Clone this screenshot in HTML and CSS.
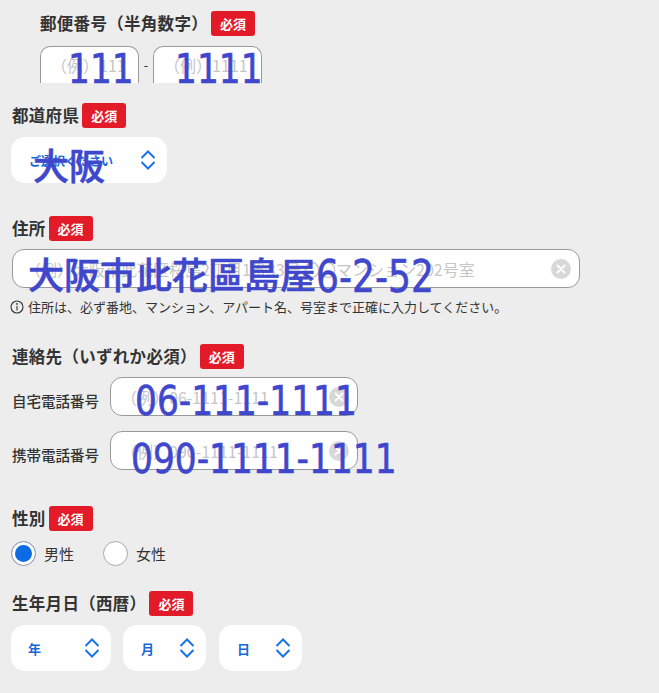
FILE: index.html
```html
<!DOCTYPE html>
<html lang="ja">
<head>
  <meta charset="UTF-8">
  <meta name="viewport" content="width=device-width, initial-scale=1.0">
  <title>お客様情報の入力</title>
  <link rel="stylesheet" href="styles.css">
</head>
<body>
  <main class="form">
    <section class="field field-postal">
      <div class="label-row">
        <span class="label">郵便番号（半角数字）</span>
        <span class="badge">必須</span>
      </div>
      <div class="postal-row">
        <input class="text-input postal-input postal-first" type="text" placeholder="（例）111">
        <span class="dash">-</span>
        <input class="text-input postal-input postal-second" type="text" placeholder="（例）1111">
      </div>
    </section>

    <section class="field field-pref">
      <div class="label-row">
        <span class="label">都道府県</span>
        <span class="badge">必須</span>
      </div>
      <div class="select-box select-pref">
        <span class="select-text">ご選択ください</span>
        <svg class="chevrons" viewBox="0 0 16 20" width="16" height="20"><path d="M1.5 8 L8 1.5 L14.5 8 M1.5 12 L8 18.5 L14.5 12"/></svg>
      </div>
    </section>

    <section class="field field-address">
      <div class="label-row">
        <span class="label">住所</span>
        <span class="badge">必須</span>
      </div>
      <div class="input-wrap address-wrap">
        <input class="text-input address-input" type="text" placeholder="（例）大阪市此花区桜島2丁目1番33号 〇〇マンション202号室">
        <span class="clear-btn"><svg viewBox="0 0 20 20" width="20" height="20"><path d="M6.5 6.5 L13.5 13.5 M13.5 6.5 L6.5 13.5"/></svg></span>
      </div>
      <p class="note">
        <svg class="info-icon" viewBox="0 0 14 14" width="14" height="14"><circle cx="7" cy="7" r="6"/><path d="M7 6 V10.5"/><circle class="dot" cx="7" cy="3.9" r="0.9"/></svg>
        住所は、必ず番地、マンション、アパート名、号室まで正確に入力してください。
      </p>
    </section>

    <section class="field field-contact">
      <div class="label-row">
        <span class="label">連絡先（いずれか必須）</span>
        <span class="badge">必須</span>
      </div>
      <div class="phone-row">
        <span class="phone-label">自宅電話番号</span>
        <div class="input-wrap phone-wrap">
          <input class="text-input phone-input" type="text" placeholder="（例）06-1111-1111">
          <span class="clear-btn"><svg viewBox="0 0 20 20" width="20" height="20"><path d="M6.5 6.5 L13.5 13.5 M13.5 6.5 L6.5 13.5"/></svg></span>
        </div>
      </div>
      <div class="phone-row phone-row-second">
        <span class="phone-label">携帯電話番号</span>
        <div class="input-wrap phone-wrap">
          <input class="text-input phone-input" type="text" placeholder="（例）090-1111-1111">
          <span class="clear-btn"><svg viewBox="0 0 20 20" width="20" height="20"><path d="M6.5 6.5 L13.5 13.5 M13.5 6.5 L6.5 13.5"/></svg></span>
        </div>
      </div>
    </section>

    <section class="field field-gender">
      <div class="label-row">
        <span class="label">性別</span>
        <span class="badge">必須</span>
      </div>
      <div class="radio-row">
        <label class="radio-item"><span class="radio checked"></span>男性</label>
        <label class="radio-item"><span class="radio"></span>女性</label>
      </div>
    </section>

    <section class="field field-birth">
      <div class="label-row">
        <span class="label">生年月日（西暦）</span>
        <span class="badge">必須</span>
      </div>
      <div class="date-row">
        <div class="select-box select-year">
          <span class="select-text">年</span>
          <svg class="chevrons" viewBox="0 0 16 20" width="16" height="20"><path d="M1.5 8 L8 1.5 L14.5 8 M1.5 12 L8 18.5 L14.5 12"/></svg>
        </div>
        <div class="select-box select-month">
          <span class="select-text">月</span>
          <svg class="chevrons" viewBox="0 0 16 20" width="16" height="20"><path d="M1.5 8 L8 1.5 L14.5 8 M1.5 12 L8 18.5 L14.5 12"/></svg>
        </div>
        <div class="select-box select-day">
          <span class="select-text">日</span>
          <svg class="chevrons" viewBox="0 0 16 20" width="16" height="20"><path d="M1.5 8 L8 1.5 L14.5 8 M1.5 12 L8 18.5 L14.5 12"/></svg>
        </div>
      </div>
    </section>
  </main>

  <!-- hand-typed answers laid over the form -->
  <div class="scribbles">
    <span class="scribble narrow s-postal-first">111</span>
    <span class="scribble narrow s-postal-second">1111</span>
    <span class="scribble s-pref">大阪</span>
    <span class="scribble s-address">大阪市此花區島屋<span class="address-num">6-2-52</span></span>
    <span class="scribble narrow s-home">06-111-1111</span>
    <span class="scribble narrow s-mobile">090-1111-1111</span>
  </div>
</body>
</html>
```

FILE: styles.css
```css
* {
  box-sizing: border-box;
}
body {
  margin: 0;
  width: 659px;
  height: 693px;
  overflow: hidden;
  background-color: #ededed;
  color: #333;
  font-family: "Noto Sans CJK JP", "Noto Sans", sans-serif;
  position: relative;
}
.form {
  padding: 11px 0 0 12px;
}
.label-row {
  display: flex;
  align-items: center;
  gap: 3px;
  height: 25px;
}
.label {
  font-size: 16.5px;
  font-weight: 700;
  letter-spacing: 0.3px;
  line-height: 25px;
}
.badge {
  width: 44px;
  height: 25px;
  border-radius: 3px;
  background-color: #e31b28;
  color: white;
  text-align: center;
  font-size: 13px;
  font-weight: 700;
  line-height: 25px;
}

/* text inputs */
.text-input {
  display: block;
  border: 1px solid #9a9a9a;
  background: white;
  font-family: inherit;
  font-size: 16px;
  color: #333;
  padding: 0 12px;
  outline: none;
}
.text-input::placeholder {
  color: #c6c6c6;
}
.input-wrap {
  position: relative;
}
.clear-btn {
  position: absolute;
  right: 9px;
  top: 50%;
  width: 20px;
  height: 20px;
  margin-top: -10px;
  border-radius: 50%;
  background-color: #d8d8d8;
}
.clear-btn svg {
  display: block;
  fill: none;
  stroke: white;
  stroke-width: 2;
  stroke-linecap: round;
}

/* postal */
.field-postal {
  padding-left: 28px;
}
.postal-row {
  display: flex;
  align-items: center;
  margin-top: 10px;
  height: 37px;
}
.postal-input {
  height: 37px;
  border-bottom: none;
  border-radius: 10px 10px 0 0;
  padding-left: 10px;
}
.postal-first {
  width: 99px;
}
.postal-second {
  width: 109px;
}
.dash {
  width: 14px;
  text-align: center;
  font-size: 13px;
  line-height: 1;
}

/* selects */
.select-box {
  display: flex;
  align-items: center;
  justify-content: space-between;
  height: 46px;
  background: white;
  border-radius: 14px;
  padding: 0 11px 0 18px;
}
.select-text {
  color: #1668d9;
  font-size: 12px;
  font-weight: 700;
}
.chevrons {
  display: block;
  fill: none;
  stroke: #1a73e8;
  stroke-width: 2;
}
.field-pref {
  margin-top: 20px;
}
.select-pref {
  width: 156px;
  margin: 9px 0 0 -1px;
}

/* address */
.field-address {
  margin-top: 33px;
}
.address-wrap {
  margin-top: 8px;
  width: 568px;
}
.address-input {
  width: 100%;
  height: 39px;
  border-radius: 12px;
}
.note {
  display: flex;
  align-items: center;
  gap: 4px;
  margin: 10px 0 0 -2px;
  font-size: 13px;
  line-height: 18px;
  color: #333;
}
.info-icon {
  fill: none;
  stroke: #333;
  stroke-width: 1.1;
}
.info-icon .dot {
  fill: #333;
  stroke: none;
}

/* contact */
.field-contact {
  margin-top: 28px;
}
.phone-row {
  display: flex;
  align-items: center;
  margin-top: 8px;
}
.phone-row-second {
  margin-top: 15px;
}
.phone-label {
  width: 98px;
  padding-top: 8px;
  font-size: 14.5px;
  font-weight: 500;
}
.phone-wrap {
  width: 248px;
}
.phone-input {
  width: 100%;
  height: 39px;
  border-radius: 12px;
  padding-left: 10px;
}

/* gender */
.field-gender {
  margin-top: 36px;
}
.radio-row {
  display: flex;
  align-items: center;
  gap: 29px;
  margin: 10px 0 0 -1px;
  height: 25px;
}
.radio-item {
  display: flex;
  align-items: center;
  gap: 8px;
  font-size: 15px;
}
.radio {
  width: 25px;
  height: 25px;
  border-radius: 50%;
  border: 1.5px solid #a9a9a9;
  background: white;
}
.radio.checked {
  background: #0b6be3;
  box-shadow: inset 0 0 0 3px white;
}

/* birth date */
.field-birth {
  margin-top: 25px;
}
.date-row {
  display: flex;
  gap: 12px;
  margin: 9px 0 0 -1px;
}
.select-year {
  width: 100px;
  padding-left: 17px;
}
.select-month {
  width: 83px;
  padding-left: 18px;
}
.select-day {
  width: 83px;
  padding-left: 18px;
  margin-left: 1px;
}
.select-year .select-text,
.select-month .select-text,
.select-day .select-text {
  font-size: 13px;
}

/* overlaid handwriting-like answers */
.scribbles {
  position: absolute;
  left: 0;
  top: 0;
  width: 100%;
  height: 100%;
  pointer-events: none;
}
.scribble {
  position: absolute;
  color: #3f47cc;
  font-family: "DejaVu Sans", "Noto Sans CJK JP", sans-serif;
  line-height: 1;
  white-space: nowrap;
  -webkit-text-stroke: 0.6px #3f47cc;
}
.narrow {
  font-size: 40px;
  transform: scaleX(0.86);
  transform-origin: left top;
}
.s-postal-first {
  left: 68px;
  top: 49px;
}
.s-postal-second {
  left: 175px;
  top: 49px;
}
.s-pref {
  left: 33px;
  top: 146px;
  font-size: 36px;
  font-family: "Noto Sans CJK JP", sans-serif;
  font-weight: 500;
}
.s-address {
  left: 28px;
  top: 255px;
  font-size: 36px;
  font-weight: 500;
}
.address-num {
  display: inline-block;
  font-size: 44px;
  font-weight: 400;
  vertical-align: -3px;
  transform: scaleX(0.82);
  transform-origin: left bottom;
}
.s-home {
  left: 135px;
  top: 381px;
}
.s-mobile {
  left: 131px;
  top: 439px;
}
```
